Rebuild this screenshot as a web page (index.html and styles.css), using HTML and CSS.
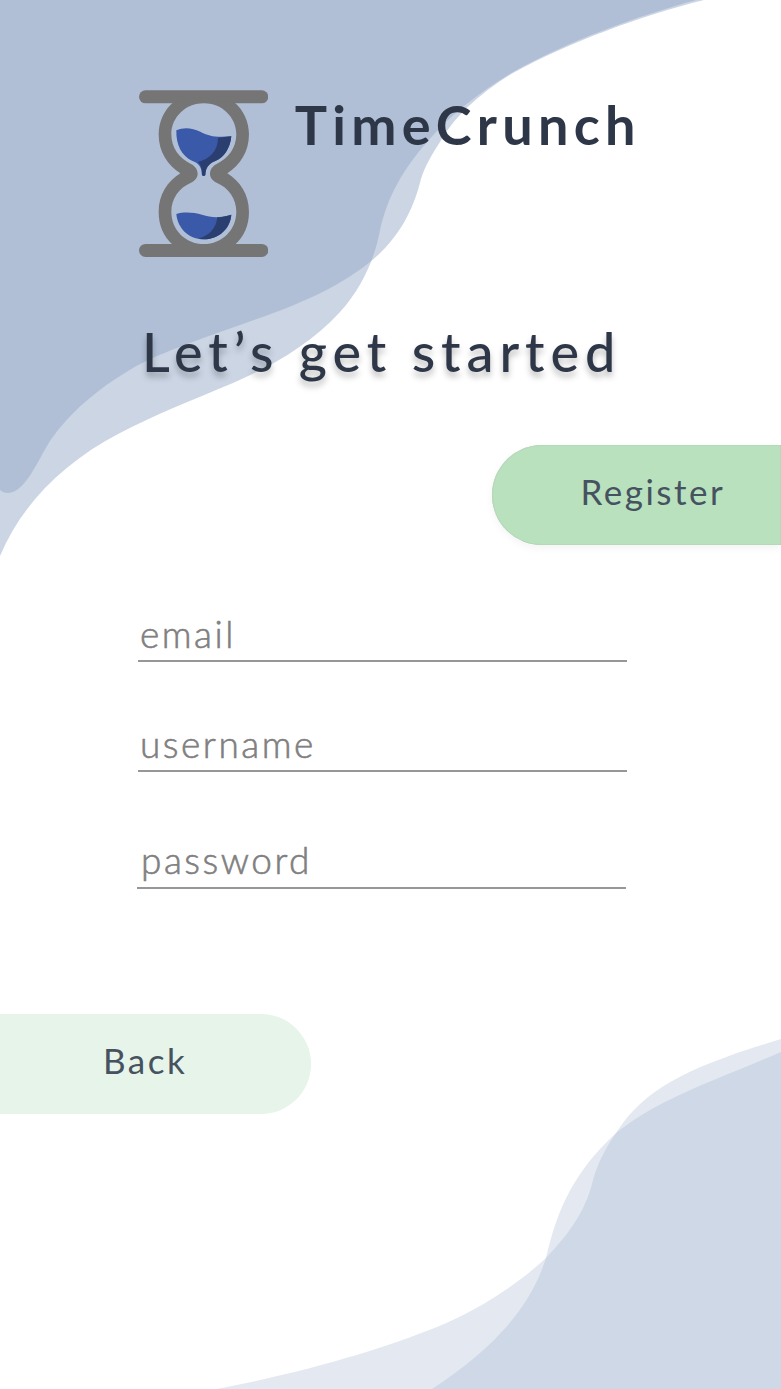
FILE: index.html
```html
<!DOCTYPE html>
<html lang="en">
<head>
<meta charset="utf-8">
<title>TimeCrunch</title>
<link rel="stylesheet" href="styles.css">
</head>
<body>
<main class="screen">
  <svg class="waves" viewBox="0 0 781 1389" aria-hidden="true">
    <g class="wave-top">
      <path d="M0 0H704C640 16 570 42 513 73C480 93 454 117 440 142C431 156 425 166 421 179C414 207 401 237 370 262C325 298 270 314 223 331C180 346 150 358 133 368C95 390 68 415 50 441C38 460 25 493 8 493C5 493 2 492 0 490Z"/>
      <path d="M0 0H696C637 16 568 41 513 72C480 92 455 112 437 131C400 170 387 200 380 230C375 258 362 288 340 312C310 345 270 367 233 383C190 401 154 415 120 433C60 464 20 508 0 556Z"/>
    </g>
    <g class="wave-bottom">
      <path d="M217 1389C310 1371 382 1349 437 1327C480 1309 518 1284 546 1258C572 1231 587 1207 593 1180C599 1160 606 1148 616 1133C645 1087 692 1066 781 1039V1389Z"/>
      <path d="M432 1389C490 1351 530 1310 546 1258C555 1221 567 1178 616 1133C660 1098 712 1082 781 1052V1389Z"/>
    </g>
  </svg>

  <header class="brand">
    <svg class="logo" viewBox="56 59 388 502" aria-hidden="true">
      <g class="frame">
        <rect x="56" y="60" width="388" height="39" rx="19.5"/>
        <rect x="56" y="521" width="388" height="39" rx="19.5"/>
        <path id="half" d="M160 95C130 120 115 155 115 192C115 245 142 285 180 309C142 333 115 372 115 425C115 465 130 500 158 524H251V521C195 521 153 478 153 424C153 385 176 352 212 337C224 331 232 322 232 310C232 298 224 287 212 281C176 264 153 232 153 192C153 140 197 98 251 98V90Z"/>
        <use href="#half" transform="matrix(-1 0 0 1 501 0)"/>
      </g>
      <g class="sand">
        <path d="M168 180C190 170 215 172 240 184C265 197 285 202 333 198C330 235 310 262 285 272C265 280 256 292 255 314Q250 320 245 314C245 290 235 278 215 271C185 258 167 225 168 180Z"/>
        <path d="M168 431C190 424 220 426 245 433C275 443 300 443 333 433C330 475 295 507 250 507C207 507 172 475 168 431Z"/>
      </g>
      <g class="sand-shade">
        <path d="M293 202Q315 201 333 198C330 235 310 262 285 272C265 280 256 292 255 314Q250 320 245 314C245 295 243 285 233 275C270 265 293 240 293 202Z"/>
        <path d="M291 441C305 441 320 437 333 433C330 475 295 507 250 507L233 505C265 498 288 475 291 441Z"/>
      </g>
    </svg>
    <h1 class="name">TimeCrunch</h1>
  </header>

  <h2 class="headline">Let’s get started</h2>
  <button class="pill register" type="button">Register</button>

  <form class="fields">
    <input class="field email" type="text" placeholder="email" aria-label="email">
    <input class="field username" type="text" placeholder="username" aria-label="username">
    <input class="field password" type="password" placeholder="password" aria-label="password">
  </form>

  <button class="pill back" type="button">Back</button>
</main>
</body>
</html>
```
FILE: styles.css
```css
* {
  box-sizing: border-box;
}

body {
  margin: 0;
  background: #fff;
  font-family: Lato, "Open Sans", sans-serif;
}

.screen {
  position: relative;
  isolation: isolate;
  display: flex;
  flex-direction: column;
  width: 781px;
  height: 1389px;
  overflow: hidden;
  color: #2e3747;
}

.waves {
  position: absolute;
  inset: 0;
  z-index: -1;
}

.wave-top {
  fill: rgba(147, 167, 199, 0.48);
}

.wave-bottom {
  fill: rgba(163, 179, 208, 0.3);
}

.brand {
  display: flex;
  align-items: flex-start;
  gap: 27px;
  height: 168px;
  margin: 90px 0 0 138.5px;
}

.logo {
  width: 129.3px;
  height: 167.3px;
}

.frame {
  fill: #757575;
}

.sand {
  fill: #3a59a8;
}

.sand-shade {
  fill: #2a3f70;
}

.name,
.headline {
  margin: 0;
  font-size: 54px;
  line-height: 64px;
  white-space: nowrap;
}

.name {
  margin-top: 3px;
  font-weight: 700;
  letter-spacing: 5.3px;
}

.headline {
  margin: 62px 0 0 142px;
  font-weight: 500;
  letter-spacing: 5.9px;
  text-shadow: 0 5px 6px rgba(0, 0, 0, 0.25);
}

.pill {
  height: 100px;
  border: 0;
  padding: 0 0 9px;
  font: 400 35px/44px Lato, "Open Sans", sans-serif;
  letter-spacing: 2.5px;
  color: #465260;
  text-align: left;
}

.register {
  align-self: flex-end;
  width: 289.5px;
  margin-top: 61px;
  padding-left: 89px;
  border-radius: 50px 0 0 50px;
  background: #b9e1be;
  box-shadow: 0 3px 8px rgba(0, 0, 0, 0.05), inset 0 0 1px rgba(90, 110, 100, 0.5);
}

.fields {
  display: flex;
  flex-direction: column;
  margin: 61px 0 0 138px;
}

.field {
  width: 489px;
  height: 56px;
  border: 0;
  border-bottom: 2px solid #979797;
  padding: 0 0 0 2px;
  background: transparent;
  font: 300 37px/44px Lato, "Open Sans", sans-serif;
  letter-spacing: 2.5px;
}

.field::placeholder {
  color: #808080;
  opacity: 1;
  -webkit-text-stroke: 0.6px #808080;
}

.username {
  margin-top: 54px;
}

.password {
  margin: 61px 0 0 -1px;
  padding: 0 0 2px 4px;
}

.back {
  width: 310.5px;
  margin-top: 125px;
  padding-left: 103px;
  border-radius: 0 50px 50px 0;
  background: #e6f4e9;
}
```
